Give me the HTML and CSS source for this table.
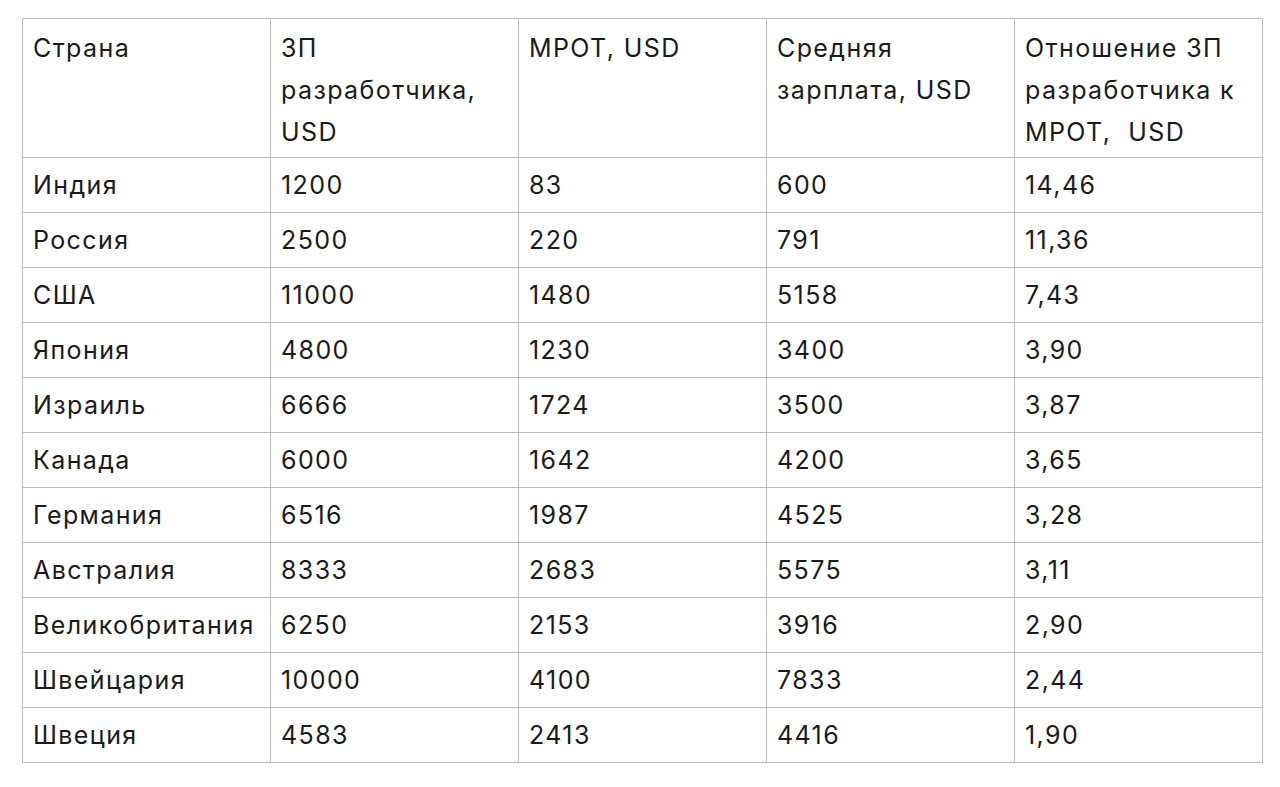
FILE: index.html
```html
<!DOCTYPE html>
<html lang="ru">
<head>
<meta charset="utf-8">
<link rel="stylesheet" href="styles.css">
</head>
<body>
<div class="wrap">
<table class="data">
<colgroup><col class="c"><col class="c"><col class="c"><col class="c"><col class="c"></colgroup>
<thead>
<tr><th>Страна</th><th>ЗП разработчика, USD</th><th>МРОТ, USD</th><th>Средняя зарплата, USD</th><th>Отношение ЗП разработчика к МРОТ,&nbsp; USD</th></tr>
</thead>
<tbody>
<tr><td>Индия</td><td>1200</td><td>83</td><td>600</td><td>14,46</td></tr>
<tr><td>Россия</td><td>2500</td><td>220</td><td>791</td><td>11,36</td></tr>
<tr><td>США</td><td>11000</td><td>1480</td><td>5158</td><td>7,43</td></tr>
<tr><td>Япония</td><td>4800</td><td>1230</td><td>3400</td><td>3,90</td></tr>
<tr><td>Израиль</td><td>6666</td><td>1724</td><td>3500</td><td>3,87</td></tr>
<tr><td>Канада</td><td>6000</td><td>1642</td><td>4200</td><td>3,65</td></tr>
<tr><td>Германия</td><td>6516</td><td>1987</td><td>4525</td><td>3,28</td></tr>
<tr><td>Австралия</td><td>8333</td><td>2683</td><td>5575</td><td>3,11</td></tr>
<tr><td>Великобритания</td><td>6250</td><td>2153</td><td>3916</td><td>2,90</td></tr>
<tr><td>Швейцария</td><td>10000</td><td>4100</td><td>7833</td><td>2,44</td></tr>
<tr><td>Швеция</td><td>4583</td><td>2413</td><td>4416</td><td>1,90</td></tr>
</tbody>
</table>
</div>
</body>
</html>
```
FILE: styles.css
```css
html, body {
  margin: 0;
  padding: 0;
  background: #ffffff;
}
.wrap {
  padding: 18px 0 0 22px;
}
.data {
  border-collapse: collapse;
  table-layout: fixed;
  width: 1240px;
  font-family: Inter, "Liberation Sans", Arial, sans-serif;
  font-size: 25px;
  letter-spacing: 1.4px;
  line-height: 42px;
  color: #1a1a1a;
}
.data .c {
  width: 248px;
}
.data th,
.data td {
  border: 1px solid #bdbdbd;
  padding: 6px 10px;
  text-align: left;
  vertical-align: top;
  font-weight: normal;
}
.data th {
  padding-top: 8px;
  padding-bottom: 4px;
}
```
